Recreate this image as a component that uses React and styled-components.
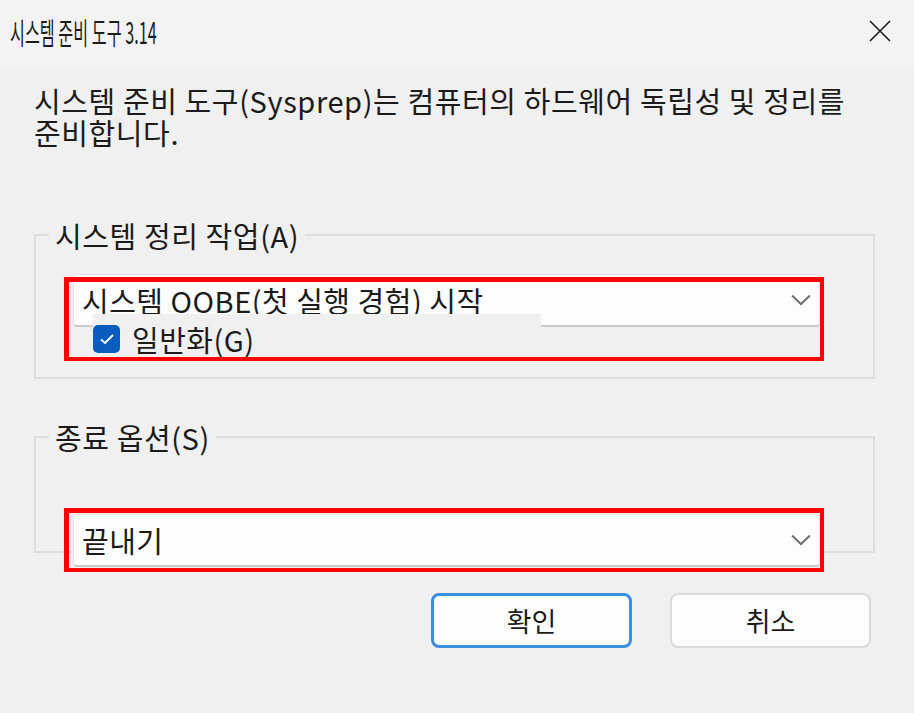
import React from "react";
import styled, { createGlobalStyle } from "styled-components";

const GlobalStyle = createGlobalStyle`
  html, body {
    margin: 0;
    padding: 0;
    background: #f0f0f0;
  }
  body {
    font-family: "Noto Sans CJK KR", "Noto Sans", sans-serif;
    color: #1b1b1b;
  }
`;

const Window = styled.div`
  width: 914px;
  height: 713px;
  background: #f0f0f0;
  overflow: hidden;
`;

const TitleBar = styled.div`
  height: 68px;
  background: #f3f3f3;
  display: flex;
  align-items: center;
  justify-content: space-between;
  padding: 0 22px 6px 10px;
  box-sizing: border-box;
`;

const TitleText = styled.span`
  display: inline-block;
  font-size: 30px;
  line-height: 34px;
  transform: scaleX(0.54);
  transform-origin: left center;
  white-space: nowrap;
`;

const CloseButton = styled.svg`
  width: 24px;
  height: 24px;
  flex: none;
`;

const Body = styled.div`
  padding: 0 39px 0 34px;
`;

const Description = styled.p`
  margin: 16px 0 0;
  font-size: 29px;
  line-height: 32px;
  letter-spacing: 0.6px;
`;

const Group = styled.fieldset`
  margin: ${(p) => p.$top}px 0 0;
  padding: ${(p) => p.$padTop}px 0 ${(p) => p.$padBottom}px 13px;
  border: 2px solid #dedede;
  min-width: 0;
`;

const Legend = styled.legend`
  padding: 0 6px;
  font-size: 29px;
  line-height: 30px;
  letter-spacing: 0.6px;
`;

const Field = styled.div`
  position: relative;
  margin-left: 24px;
  width: 747px;
  margin-bottom: ${(p) => p.$bottom || 0}px;
`;

const Combo = styled.div`
  height: ${(p) => p.$height}px;
  box-sizing: border-box;
  background: #fdfdfd;
  border: 1px solid #e3e3e3;
  border-bottom: 2px solid #cbcbcb;
  border-radius: 4px;
  display: flex;
  align-items: center;
  justify-content: space-between;
  padding: 0 8px 0 8px;
  font-size: 29px;
  letter-spacing: 0.5px;
`;

const Chevron = styled.svg`
  width: 20px;
  height: 12px;
  flex: none;
`;

const CheckRow = styled.label`
  display: flex;
  align-items: center;
  gap: 12px;
  width: 448px;
  margin: -13px 0 0 20px;
  padding: 11px 0 7px;
  background: #f0f0f0;
  position: relative;
  font-size: 29px;
  line-height: 28px;
  letter-spacing: 0.5px;
`;

const CheckBox = styled.span`
  width: 27px;
  height: 28px;
  border-radius: 5px;
  background: #0a5cbd;
  display: flex;
  align-items: center;
  justify-content: center;
  flex: none;
`;

const Highlight = styled.div`
  position: absolute;
  left: -9px;
  right: -4px;
  top: ${(p) => p.$top}px;
  bottom: ${(p) => p.$bottom}px;
  border: 4px solid #ff0000;
  border-top-width: 5px;
  border-left-width: 5px;
  pointer-events: none;
`;

const ButtonRow = styled.div`
  display: flex;
  justify-content: flex-end;
  gap: 38px;
  margin-top: 40px;
  padding-right: 4px;
`;

const Button = styled.button`
  width: 201px;
  height: 55px;
  box-sizing: border-box;
  background: #fdfdfd;
  border: ${(p) => (p.$primary ? "3px solid #3a8fde" : "2px solid #dadada")};
  border-radius: 8px;
  font-family: inherit;
  font-size: 27px;
  color: #1b1b1b;
  padding: 0;
`;

const ChevronIcon = () => (
  <Chevron viewBox="0 0 20 12">
    <path d="M1 1.5 L10 10 L19 1.5" fill="none" stroke="#6f6f6f" strokeWidth="2" />
  </Chevron>
);

export default function App() {
  return (
    <Window>
      <GlobalStyle />
      <TitleBar>
        <TitleText>시스템 준비 도구 3.14</TitleText>
        <CloseButton viewBox="0 0 24 24">
          <path d="M2 2 L22 22 M22 2 L2 22" stroke="#1b1b1b" strokeWidth="1.6" />
        </CloseButton>
      </TitleBar>
      <Body>
        <Description>
          시스템 준비 도구(Sysprep)는 컴퓨터의 하드웨어 독립성 및 정리를
          <br />
          준비합니다.
        </Description>

        <Group $top={72} $padTop={24} $padBottom={17}>
          <Legend>시스템 정리 작업(A)</Legend>
          <Field>
            <Combo $height={53}>
              <span>시스템 OOBE(첫 실행 경험) 시작</span>
              <ChevronIcon />
            </Combo>
            <CheckRow>
              <CheckBox>
                <svg width="16" height="12" viewBox="0 0 16 12">
                  <path d="M2 6.5 L6 10 L14 2" fill="none" stroke="#ffffff" strokeWidth="1.8" />
                </svg>
              </CheckBox>
              일반화(G)
            </CheckRow>
            <Highlight $top={3} $bottom={-1} />
          </Field>
        </Group>

        <Group $top={43} $padTop={62} $padBottom={0}>
          <Legend>종료 옵션(S)</Legend>
          <Field $bottom={-16}>
            <Combo $height={53}>
              <span>끝내기</span>
              <ChevronIcon />
            </Combo>
            <Highlight $top={-6} $bottom={-5} />
          </Field>
        </Group>

        <ButtonRow>
          <Button $primary>확인</Button>
          <Button>취소</Button>
        </ButtonRow>
      </Body>
    </Window>
  );
}
